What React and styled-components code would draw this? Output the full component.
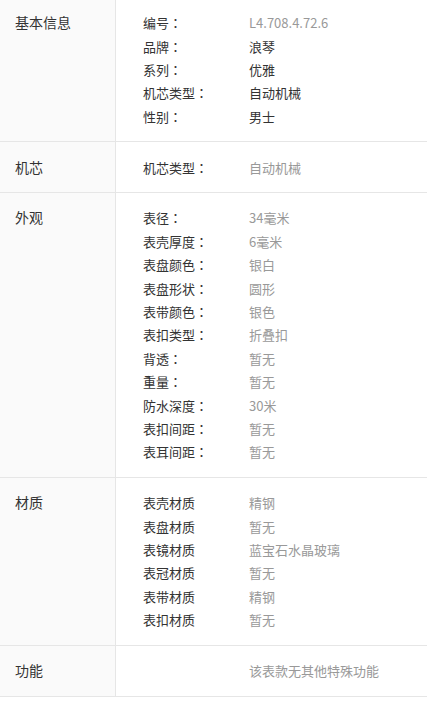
import styled, { createGlobalStyle } from "styled-components";

const sections = [
  {
    title: "基本信息",
    rows: [
      ["编号", "L4.708.4.72.6"],
      ["品牌", "浪琴", true],
      ["系列", "优雅", true],
      ["机芯类型", "自动机械", true],
      ["性别", "男士", true],
    ],
    colon: true,
  },
  { title: "机芯", rows: [["机芯类型", "自动机械"]], colon: true },
  {
    title: "外观",
    rows: [
      ["表径", "34毫米"],
      ["表壳厚度", "6毫米"],
      ["表盘颜色", "银白"],
      ["表盘形状", "圆形"],
      ["表带颜色", "银色"],
      ["表扣类型", "折叠扣"],
      ["背透", "暂无"],
      ["重量", "暂无"],
      ["防水深度", "30米"],
      ["表扣间距", "暂无"],
      ["表耳间距", "暂无"],
    ],
    colon: true,
  },
  {
    title: "材质",
    rows: [
      ["表壳材质", "精钢"],
      ["表盘材质", "暂无"],
      ["表镜材质", "蓝宝石水晶玻璃"],
      ["表冠材质", "暂无"],
      ["表带材质", "精钢"],
      ["表扣材质", "暂无"],
    ],
  },
  { title: "功能", rows: [["", "该表款无其他特殊功能"]] },
];

export default function App() {
  return (
    <>
      <GlobalStyle />
      <Table>
        {sections.map((s) => (
          <Section key={s.title}>
            <Title>{s.title}</Title>
            <Body>
              {s.rows.map(([label, value, dark], i) => (
                <Row key={i}>
                  <Label>
                    {label}
                    {s.colon && <Colon>：</Colon>}
                  </Label>
                  <Value $dark={dark}>{value}</Value>
                </Row>
              ))}
            </Body>
          </Section>
        ))}
      </Table>
    </>
  );
}

const GlobalStyle = createGlobalStyle`
  body {
    margin: 0;
    background: #fff;
    font-family: "Noto Sans CJK SC", "Noto Sans", sans-serif;
  }
`;

const Table = styled.div`
  width: 427px;
  margin-top: -2px;
`;

const Section = styled.div`
  display: flex;
  border-bottom: 1px solid #e6e6e6;
`;

const Title = styled.div`
  width: 116px;
  flex-shrink: 0;
  box-sizing: border-box;
  padding: 13.2px 0 13.2px 15px;
  background: #fafafa;
  border-right: 1px solid #e6e6e6;
  font-size: 14px;
  line-height: 23.4px;
  color: #333;
`;

const Body = styled.div`
  flex: 1;
  padding: 13.2px 0 13.2px 27px;
  display: flex;
  flex-direction: column;
`;

const Row = styled.div`
  display: flex;
  font-size: 13px;
  line-height: 23.4px;
`;

const Label = styled.span`
  width: 106px;
  flex-shrink: 0;
  color: #333;
`;

const Colon = styled.span`
  font-family: "Noto Sans CJK TC", sans-serif;
`;

const Value = styled.span`
  color: ${(p) => (p.$dark ? "#333" : "#999")};
`;
